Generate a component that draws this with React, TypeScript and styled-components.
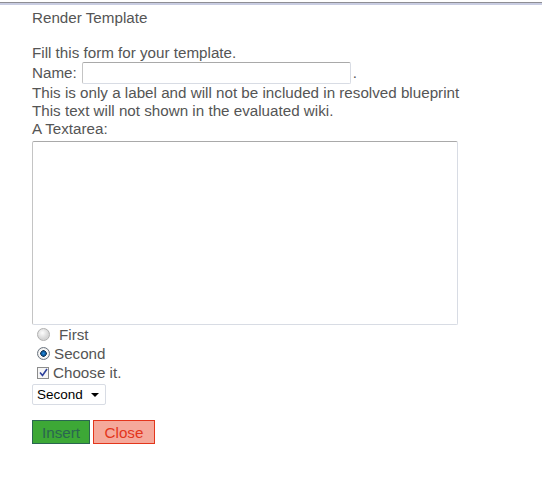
import { FC } from "react";
import styled, { createGlobalStyle } from "styled-components";

const GlobalStyle = createGlobalStyle`
  body {
    margin: 0;
    background: #fff;
    font-family: "Liberation Sans", Arial, sans-serif;
    font-size: 15.2px;
    color: #555;
  }
`;

const TopRule = styled.div`
  margin-top: 2px;
  border-top: 1px solid #8e8e94;
  border-bottom: 2px solid #c9cde2;
`;

const Page = styled.div`
  padding: 0 32px;
`;

const Title = styled.div`
  line-height: 18px;
  margin-top: 4px;
`;

const Form = styled.form`
  margin-top: 17px;
  line-height: 18px;
`;

const Line = styled.div`
  line-height: 18px;
`;

const NameRow = styled.div`
  display: flex;
  align-items: center;
  height: 22px;
`;

const NameInput = styled.input`
  box-sizing: border-box;
  width: 269px;
  height: 22px;
  margin: 0 2px 0 5px;
  border: 1px solid #d8dce4;
  border-top-color: #a9a9a9;
  border-left-color: #c4c4c4;
  border-radius: 2px;
  font: inherit;
  padding: 0 3px;
  outline: none;
`;

const TextArea = styled.textarea`
  display: block;
  box-sizing: border-box;
  width: 426px;
  height: 184px;
  margin-top: 3px;
  border: 1px solid #d8dce4;
  border-top-color: #a9a9a9;
  border-left-color: #c4c4c4;
  border-radius: 2px;
  resize: none;
  outline: none;
`;

const OptionRow = styled.label<{ $gap?: number }>`
  display: flex;
  align-items: center;
  height: 19px;
  gap: ${(p) => p.$gap ?? 5}px;
`;

const Radio = styled.span<{ $on?: boolean }>`
  box-sizing: border-box;
  display: inline-block;
  width: 13px;
  height: 13px;
  margin-left: 5px;
  border-radius: 50%;
  border: 1px solid ${(p) => (p.$on ? "#6b7580" : "#b0b0b0")};
  background: ${(p) =>
    p.$on
      ? "radial-gradient(circle, #2a8ee0 0, #0b5a9e 2px, #1c3550 3px, #fff 3.5px, #e2e2e2 6px)"
      : "radial-gradient(circle at 40% 35%, #fdfdfd 0, #d6d6d6 6px)"};
`;

const Check = styled.span`
  box-sizing: border-box;
  display: inline-flex;
  align-items: center;
  justify-content: center;
  width: 12px;
  height: 12px;
  margin-left: 5px;
  border: 1px solid #8c8c8c;
  background: #f6f6f6;
`;

const SelectWrap = styled.div`
  position: relative;
  display: inline-block;
  margin-top: 2px;
`;

const Select = styled.select`
  appearance: none;
  box-sizing: border-box;
  width: 74px;
  height: 21px;
  padding: 0 0 0 4px;
  border: 1px solid #d8dce4;
  border-radius: 2px;
  background: #fff;
  font-family: "Liberation Sans", Arial, sans-serif;
  font-size: 13.5px;
  color: #000;
  outline: none;
`;

const Caret = styled.span`
  position: absolute;
  right: 7px;
  top: 9px;
  border-left: 4px solid transparent;
  border-right: 4px solid transparent;
  border-top: 4px solid #000;
  pointer-events: none;
`;

const Buttons = styled.div`
  display: flex;
  gap: 3px;
  margin-top: 15px;
`;

const Button = styled.button<{ $bg: string; $fg: string; $text: string; $width: number }>`
  box-sizing: border-box;
  width: ${(p) => p.$width}px;
  height: 24px;
  padding: 0;
  border: 1px solid ${(p) => p.$fg};
  background: ${(p) => p.$bg};
  color: ${(p) => p.$text};
  font-family: "Liberation Sans", Arial, sans-serif;
  font-size: 15.2px;
`;

const App: FC = () => {
  return (
    <>
      <GlobalStyle />
      <TopRule />
      <Page>
        <Title>Render Template</Title>
        <Form onSubmit={(e) => e.preventDefault()}>
          <Line>Fill this form for your template.</Line>
          <NameRow>
            Name:
            <NameInput type="text" />.
          </NameRow>
          <Line>This is only a label and will not be included in resolved blueprint</Line>
          <Line>This text will not shown in the evaluated wiki.</Line>
          <Line>A Textarea:</Line>
          <TextArea />
          <OptionRow $gap={9}>
            <Radio />
            First
          </OptionRow>
          <OptionRow $gap={4}>
            <Radio $on />
            Second
          </OptionRow>
          <OptionRow $gap={4}>
            <Check>
              <svg width="9" height="9" viewBox="0 0 9 9">
                <path d="M1 4.5 L3.5 7.5 L8 1" fill="none" stroke="#2c3f9a" strokeWidth="1.6" />
              </svg>
            </Check>
            Choose it.
          </OptionRow>
          <SelectWrap>
            <Select defaultValue="Second">
              <option>First</option>
              <option>Second</option>
            </Select>
            <Caret />
          </SelectWrap>
          <Buttons>
            <Button type="button" $bg="#3da836" $fg="#2a6650" $text="#2a6650" $width={58}>
              Insert
            </Button>
            <Button type="button" $bg="#f5a99b" $fg="#e3361c" $text="#e3361c" $width={62}>
              Close
            </Button>
          </Buttons>
        </Form>
      </Page>
    </>
  );
};

export default App;
